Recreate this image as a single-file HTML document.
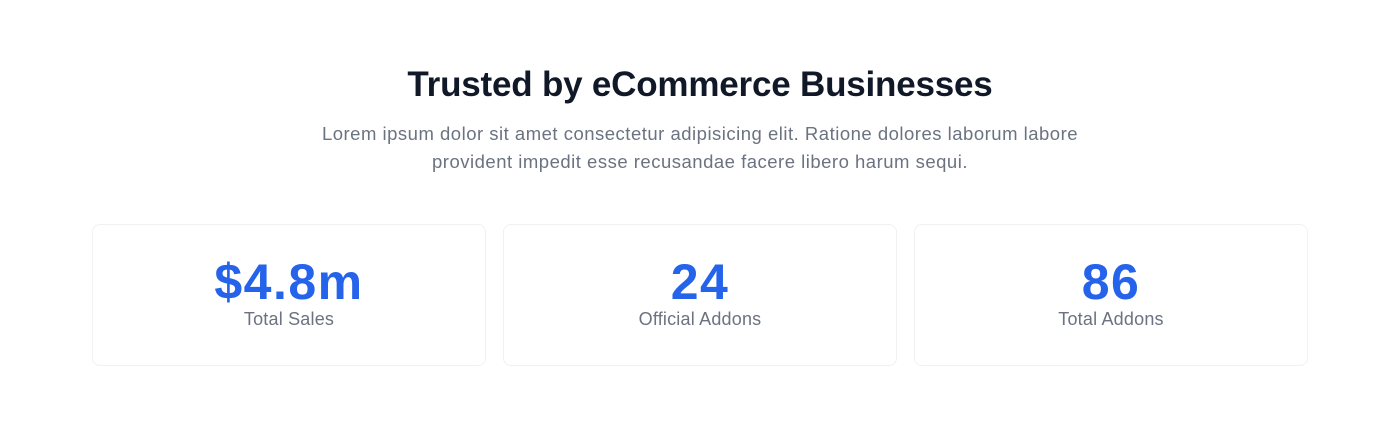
<!DOCTYPE html>
<html><head><style>
body{margin:0;background:#fff;width:1400px;height:445px;font-family:"Liberation Sans",sans-serif;}
h1{position:absolute;top:62px;left:0;width:1400px;text-align:center;margin:0;font-size:35px;font-weight:700;color:#111827;line-height:46px;letter-spacing:-0.2px}
p{position:absolute;top:120px;left:0;width:1400px;text-align:center;margin:0;font-size:18.5px;line-height:28px;color:#6b7280;letter-spacing:0.5px}
.card{position:absolute;top:224px;width:392px;height:140px;border:1px solid #f0f1f3;border-radius:8px;text-align:center}
.n{position:absolute;top:252px;width:394px;text-align:center;font-size:50px;font-weight:900;color:#2563eb;line-height:60px;letter-spacing:1.5px}
.l{position:absolute;top:306px;width:394px;text-align:center;font-size:18px;color:#6b7280;line-height:26px;letter-spacing:0.2px}
</style></head><body>
<h1>Trusted by eCommerce Businesses</h1>
<p>Lorem ipsum dolor sit amet consectetur adipisicing elit. Ratione dolores laborum labore<br>provident impedit esse recusandae facere libero harum sequi.</p>
<div class="card" style="left:92px"></div>
<div class="card" style="left:503px"></div>
<div class="card" style="left:914px"></div>
<div class="n" style="left:92px">$4.8m</div><div class="l" style="left:92px">Total Sales</div>
<div class="n" style="left:503px">24</div><div class="l" style="left:503px">Official Addons</div>
<div class="n" style="left:914px">86</div><div class="l" style="left:914px">Total Addons</div>
</body></html>
